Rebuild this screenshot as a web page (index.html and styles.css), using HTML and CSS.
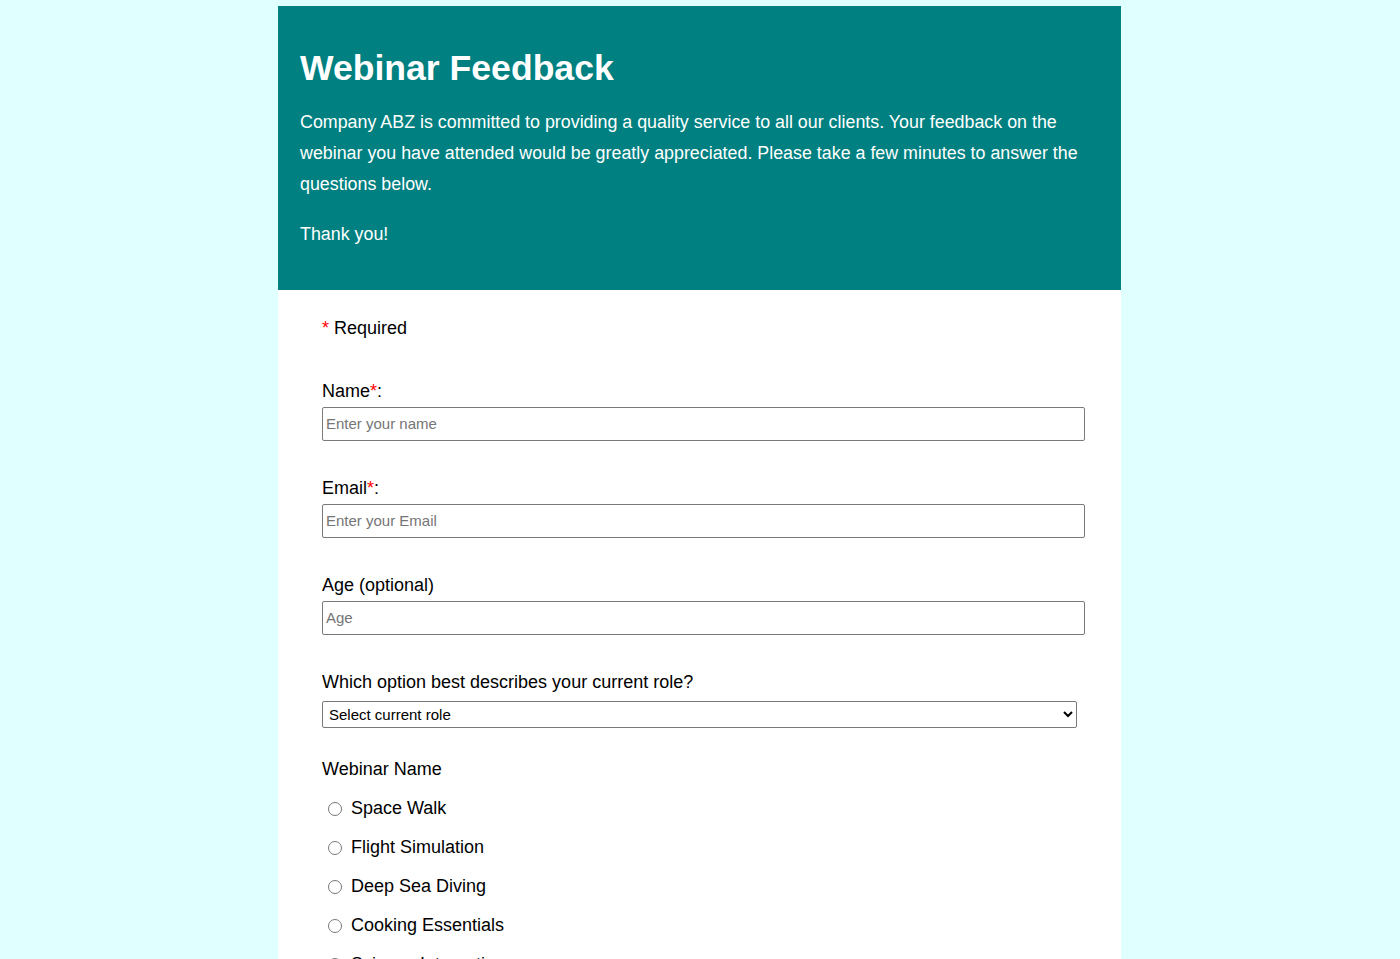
FILE: index.html
```html
<!DOCTYPE html>
<html lang="en">
<head>
<meta charset="utf-8">
<title>Webinar Feedback</title>
<link rel="stylesheet" href="styles.css">
</head>
<body>
<div class="container">
  <header class="header">
    <h1 class="title">Webinar Feedback</h1>
    <p class="intro">Company ABZ is committed to providing a quality service to all our clients. Your feedback on the webinar you have attended would be greatly appreciated. Please take a few minutes to answer the questions below.</p>
    <p class="intro">Thank you!</p>
  </header>
  <form class="form">
    <p class="required-note"><span class="star">*</span> Required</p>
    <div class="field">
      <label class="label" for="name">Name<span class="star">*</span>:</label>
      <input class="text-input" id="name" type="text" placeholder="Enter your name">
    </div>
    <div class="field">
      <label class="label" for="email">Email<span class="star">*</span>:</label>
      <input class="text-input" id="email" type="email" placeholder="Enter your Email">
    </div>
    <div class="field">
      <label class="label" for="age">Age (optional)</label>
      <input class="text-input" id="age" type="number" placeholder="Age">
    </div>
    <div class="field field-select">
      <label class="label label-select" for="role">Which option best describes your current role?</label>
      <select class="select" id="role">
        <option>Select current role</option>
      </select>
    </div>
    <div class="field-radio">
      <p class="label label-group">Webinar Name</p>
      <label class="radio-row"><input class="radio" type="radio" name="webinar"><span>Space Walk</span></label>
      <label class="radio-row"><input class="radio" type="radio" name="webinar"><span>Flight Simulation</span></label>
      <label class="radio-row"><input class="radio" type="radio" name="webinar"><span>Deep Sea Diving</span></label>
      <label class="radio-row"><input class="radio" type="radio" name="webinar"><span>Cooking Essentials</span></label>
      <label class="radio-row"><input class="radio" type="radio" name="webinar"><span>Science Integration</span></label>
    </div>
  </form>
</div>
</body>
</html>
```
FILE: styles.css
```css
* {
  box-sizing: border-box;
}

html, body {
  margin: 0;
  padding: 0;
  background: #e0ffff;
  font-family: "Liberation Sans", Arial, sans-serif;
  color: #000;
}

body {
  padding-right: 1px;
}

.container {
  width: 843px;
  margin: 6px auto 0;
  background: #fff;
  min-height: 1200px;
}

.header {
  background: #008080;
  color: #fff;
  padding: 42px 22px 21px;
}

.title {
  margin: 0;
  font-size: 35.6px;
  line-height: 40px;
  font-weight: bold;
}

.intro {
  margin: 19px 0;
  font-size: 17.85px;
  line-height: 31px;
}

.form {
  padding: 28px 44px 40px;
}

.required-note {
  margin: 0 0 41px;
  font-size: 18px;
  line-height: 21px;
}

.star {
  color: #ff0000;
}

.field {
  margin-bottom: 36px;
}

.field-select {
  margin-bottom: 30px;
}

.label {
  display: block;
  font-size: 18px;
  line-height: 21px;
  padding-top: 1px;
  margin: 0 0 5px;
}

.label-select {
  margin-bottom: 8px;
}

.label-group {
  margin-bottom: 9px;
}

.text-input {
  box-sizing: content-box;
  display: block;
  width: 100%;
  height: 18px;
  padding: 7px 3px;
  margin: 0;
  border: 1px solid #7a7a7a;
  border-radius: 2px;
  font-family: "Liberation Sans", Arial, sans-serif;
  font-size: 15px;
  line-height: 18px;
  color: #000;
  background: #fff;
}

.text-input::placeholder {
  color: #757575;
}

.select {
  display: block;
  width: 100%;
  height: 27px;
  margin: 0;
  padding: 0 2px;
  border: 1px solid #7a7a7a;
  border-radius: 2px;
  font-family: "Liberation Sans", Arial, sans-serif;
  font-size: 15px;
  color: #000;
  background: #fff;
}

.radio-row {
  display: flex;
  align-items: center;
  height: 39px;
  font-size: 18px;
}

.radio {
  appearance: none;
  -webkit-appearance: none;
  width: 14px;
  height: 14px;
  margin: 0 9px 0 6px;
  border: 1px solid #7a7a7a;
  border-radius: 50%;
  background: #fff;
  flex: none;
}
```
